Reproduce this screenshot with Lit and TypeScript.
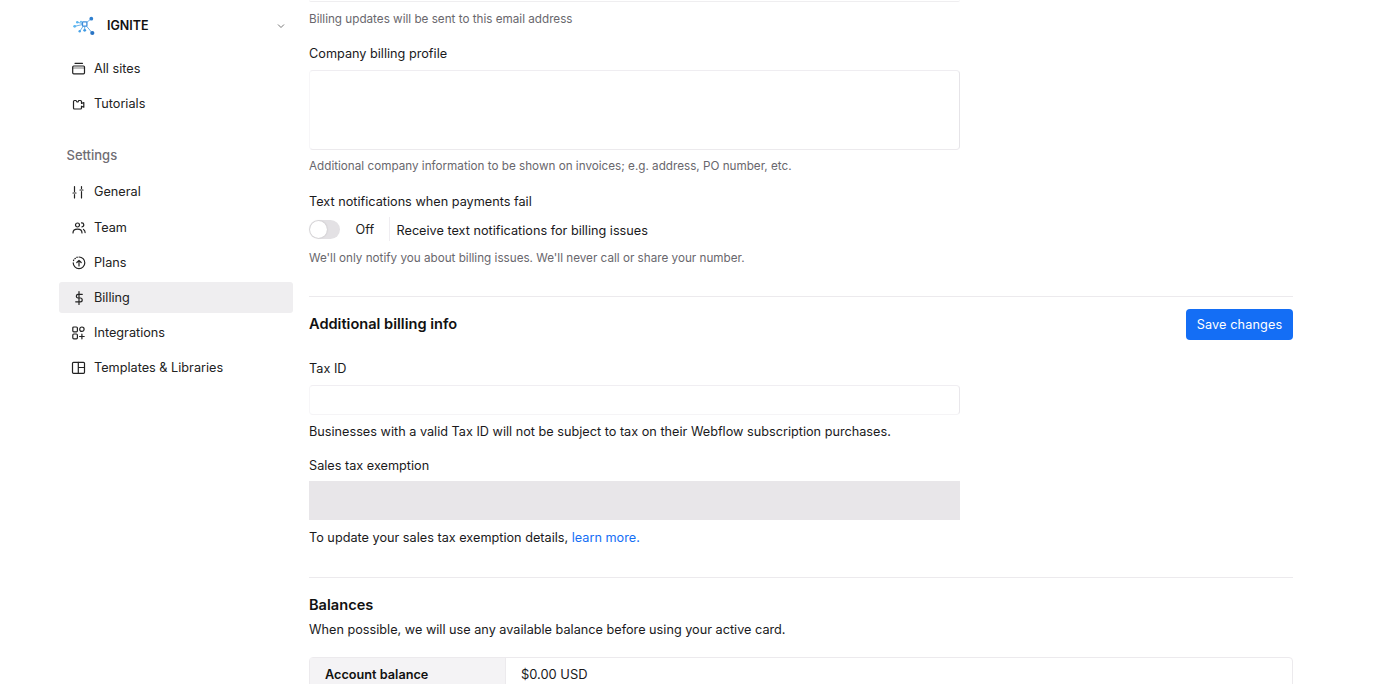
import { LitElement, html, css, svg } from "lit";
import { customElement } from "lit/decorators.js";

const icons: Record<string, unknown> = {
  sites: svg`<path d="M4 2.300h7.500"/><rect x="1.700" y="5" width="11.800" height="7.800" rx="1"/><path d="M1.700 7h11.800" stroke-width=".6"/>`,
  tutorials: svg`<path d="M2.500 5.500a1 1 0 0 1 1-1H5l1 1.500h1l.7-1.500h1.800a1 1 0 0 1 1 1v2l2.300-1v4.700l-2.300-1v1.800a1 1 0 0 1-1 1H3.500a1 1 0 0 1-1-1z"/>`,
  general: svg`<path d="M3.500 1.500v5M3.500 9.500V13M2 8h3M10.500 1.500v2M10.500 6.500V13M9 5h3"/>`,
  team: svg`<circle cx="6.500" cy="5" r="2"/><path d="M2 13c0-2.500 2-3.800 4.500-3.800S11 10.500 11 13M10.500 2.900a2 2 0 0 1 .5 4M12.500 9.400c1 .6 1.600 1.800 1.600 3.200"/>`,
  plans: svg`<path d="M8 2a5.800 5.800 0 1 1-5.800 5.800"/><path d="M2.500 5.600l.3-.6M3.900 3.700l.5-.4M5.800 2.400l.5-.2"/><path d="M8 11V5.300M5.800 7.500 8 5.300l2.200 2.200"/>`,
  billing: svg`<path d="M8 1.500v13M11.300 4.300H6.800a1.900 1.900 0 0 0 0 3.700h2.500a1.900 1.900 0 0 1 0 3.800H4.700"/>`,
  integrations: svg`<rect x="1.800" y="2" width="4.600" height="4.800" rx="1"/><circle cx="10.900" cy="4.200" r="2.200"/><rect x="1.800" y="9" width="4.600" height="4.800" rx="1"/><path d="M10.900 9.200v4.600M8.600 11.500h4.600"/>`,
  templates: svg`<rect x="1.500" y="2.300" width="12" height="11" rx="1"/><path d="M7.300 2.300v11M7.300 7.500h6.200"/>`,
};

const nodes: [number, number, number, string][] = [
  [19.3, 4.700, 1.900, "#2f80d0"],
  [20.3, 19, 2.100, "#2a74c4"],
  [2.700, 12.300, 1.400, "#5cb6f0"],
  [5.300, 8.300, 1.300, "#5cb6f0"],
  [7.700, 17.300, 1.200, "#4aa3e8"],
  [12.700, 16.300, 1.400, "#3f9ae4"],
  [9, 7.800, 1, "#5cb6f0"],
];

@customElement("app-root")
export class AppRoot extends LitElement {
  static styles = css`
    :host {
      display: block;
      height: 684px;
      overflow: hidden;
      background: #fff;
      font-family: Inter, "Liberation Sans", sans-serif;
      font-size: 12.700px;
      line-height: 18px;
      color: #1a1a1c;
    }
    .page { display: flex; gap: 16px; padding-left: 59px; width: 1293px; box-sizing: border-box; }
    aside { width: 234px; flex: none; padding-top: 15px; }
    .brand { display: flex; align-items: center; height: 22px; padding-left: 13px; }
    .logo { width: 24px; height: 24px; flex: none; }
    .brand b { margin-left: 11px; font-size: 12.500px; font-weight: 600; color: #111; flex: 1; }
    .chev { width: 8px; height: 8px; margin-right: 8px; fill: none; stroke: #777; stroke-width: 1; }
    nav { display: flex; flex-direction: column; gap: 4px; }
    .top-nav { margin-top: 16px; }
    .group { margin: 27px 0 13px 7.500px; color: #6f6d73; font-weight: 500; font-size: 13px; }
    .item { display: flex; align-items: center; height: 31px; border-radius: 3px; padding-left: 12px; gap: 7px; color: #222; }
    .item.active { background: #efeef0; }
    .item svg { width: 16px; height: 16px; flex: none; fill: none; stroke: #222; stroke-width: 1.200; stroke-linecap: round; stroke-linejoin: round; }
    .settings .item:first-child span { margin-bottom: 2px; }

    main { flex: 1; min-width: 0; }
    .form { width: 651px; }
    .field-top { height: 1px; border-bottom: 1px solid #efeef0; border-radius: 0 0 3px 3px; }
    .hint { color: #69676d; font-size: 11.700px; }
    .label { color: #1a1a1c; }
    .hint.first { margin-top: 8px; }
    .label.a { margin-top: 17px; }
    .area {
      height: 78px;
      margin-top: 7px;
      border: 1px solid;
      border-color: #efedf1 #e6e4e8 #eceaed #f7f6f8;
      border-radius: 4px;
    }
    .hint.b { margin-top: 7px; }
    .label.c { margin-top: 18px; }
    .toggle-row { display: flex; align-items: center; height: 24px; margin-top: 6px; }
    .toggle { position: relative; width: 31px; height: 19px; border-radius: 10px; background: #e3e1e4; flex: none; }
    .knob { position: absolute; left: 1px; top: 1px; width: 17px; height: 17px; border-radius: 50%; background: #fff; box-shadow: 0 0 2px #0003; }
    .off { margin-left: 15.500px; width: 33px; color: #222; flex: none; margin-top: 1px; }
    .desc { border-left: 1px solid #efedf1; height: 24px; line-height: 28px; padding-left: 7px; }
    .hint.d { margin-top: 8px; }
    hr { border: 0; border-top: 1px solid #eceaed; margin: 0; }
    .hr1 { margin-top: 29px; }
    .head { display: flex; justify-content: space-between; align-items: center; margin-top: 12px; }
    h2 { margin: 0; font-size: 14.600px; font-weight: 600; line-height: 20px; color: #111; }
    .head h2 { margin-bottom: 2px; }
    button { all: unset; box-sizing: border-box; width: 107px; height: 31px; background: #146ef5; color: #fff; border-radius: 4px; text-align: center; font: inherit; line-height: 30px; letter-spacing: 0.1px; }
    .label.e { margin-top: 20px; }
    .input {
      height: 30px;
      margin-top: 7px;
      box-sizing: border-box;
      border: 1px solid;
      border-color: #f0eef2 #e9e7eb #f5f4f6 #f7f6f8;
      border-radius: 4px;
    }
    .text.f { margin-top: 8px; }
    .label.g { margin-top: 16px; }
    .grey { height: 39px; margin-top: 6px; background: #e8e6e9; }
    .text.h { margin-top: 9px; }
    a { color: #146ef5; text-decoration: none; }
    .hr2 { margin-top: 30px; }
    h2.bal { margin-top: 17px; }
    .text.i { margin-top: 6px; }
    .table { display: grid; grid-template-columns: 196px 1fr; margin-top: 18px; border: 1px solid #eceaed; border-radius: 4px; height: 60px; }
    .table b { background: #f4f3f5; font-weight: 600; padding: 8px 15px; border-right: 1px solid #eceaed; color: #111; }
    .table span { padding: 8px 15px; color: #1a1a1c; font-size: 12.900px; }
  `;

  private navItem(key: string, label: string, active = false) {
    return html`<div class="item ${active ? "active" : ""}">
      <svg viewBox="0 0 16 16">${icons[key]}</svg><span>${label}</span>
    </div>`;
  }

  render() {
    return html`<div class="page">
      <aside>
        <div class="brand">
          <svg class="logo" viewBox="0 0 24 24">
            <g stroke="#5aa9e6" stroke-width=".9" fill="none">
              <path d="M2.700 12.300 12.700 10 19.300 4.700M5.300 8.300 12.700 10 20.300 19M7.700 17.300 12.700 10 12.700 16.300"/>
            </g>
            ${nodes.map(([x, y, r, c]) => svg`<circle cx=${x} cy=${y} r=${r} fill=${c}/>`)}
            <rect x="10.500" y="7.800" width="4.400" height="4.400" rx=".6" fill="#fff" stroke="#3d8fdc" stroke-width="1.300"/>
          </svg>
          <b>IGNITE</b>
          <svg class="chev" viewBox="0 0 8 8"><path d="M1 2.500 4 5.500 7 2.500"/></svg>
        </div>
        <nav class="top-nav">
          ${this.navItem("sites", "All sites")}
          ${this.navItem("tutorials", "Tutorials")}
        </nav>
        <div class="group">Settings</div>
        <nav class="settings">
          ${this.navItem("general", "General")}
          ${this.navItem("team", "Team")}
          ${this.navItem("plans", "Plans")}
          ${this.navItem("billing", "Billing", true)}
          ${this.navItem("integrations", "Integrations")}
          ${this.navItem("templates", "Templates & Libraries")}
        </nav>
      </aside>
      <main>
        <div class="form">
          <div class="field-top"></div>
          <div class="hint first">Billing updates will be sent to this email address</div>
          <div class="label a">Company billing profile</div>
          <div class="area"></div>
          <div class="hint b">Additional company information to be shown on invoices; e.g. address, PO number, etc.</div>
          <div class="label c">Text notifications when payments fail</div>
          <div class="toggle-row">
            <div class="toggle"><div class="knob"></div></div>
            <div class="off">Off</div>
            <div class="desc">Receive text notifications for billing issues</div>
          </div>
          <div class="hint d">We'll only notify you about billing issues. We'll never call or share your number.</div>
        </div>
        <hr class="hr1" />
        <div class="head"><h2>Additional billing info</h2><button>Save changes</button></div>
        <div class="form">
          <div class="label e">Tax ID</div>
          <div class="input"></div>
          <div class="text f">Businesses with a valid Tax ID will not be subject to tax on their Webflow subscription purchases.</div>
          <div class="label g">Sales tax exemption</div>
          <div class="grey"></div>
          <div class="text h">To update your sales tax exemption details, <a>learn more.</a></div>
        </div>
        <hr class="hr2" />
        <h2 class="bal">Balances</h2>
        <div class="text i">When possible, we will use any available balance before using your active card.</div>
        <div class="table"><b>Account balance</b><span>$0.00 USD</span></div>
      </main>
    </div>`;
  }
}
